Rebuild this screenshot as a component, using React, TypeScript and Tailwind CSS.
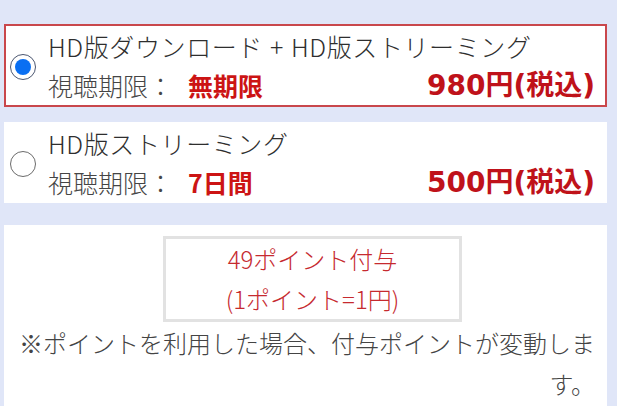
import React from 'react';

const jp = { fontFamily: '"Noto Sans CJK JP", "Noto Sans", sans-serif' };
const price = { fontFamily: '"DejaVu Sans", "Noto Sans CJK JP", sans-serif' };

const Radio = ({ checked }: { checked?: boolean }) => (
  <span
    className={
      'mt-[3px] flex h-[26px] w-[26px] shrink-0 items-center justify-center rounded-full border-[1.5px] bg-white ' +
      (checked ? 'border-[#4b5670]' : 'border-[#6b6b6b]')
    }
  >
    {checked && <span className="h-[16px] w-[16px] rounded-full bg-[#0a6ff2]" />}
  </span>
);

type PlanProps = {
  title: React.ReactNode;
  period: string;
  amount: string;
  checked?: boolean;
};

const Plan = ({ title, period, amount, checked }: PlanProps) => (
  <label
    className={
      'flex items-center bg-white ' +
      (checked ? 'border-2 border-[#c9474c] pl-[4px] pr-[10px]' : 'border border-white pl-[5px] pr-[11px]')
    }
  >
    <Radio checked={checked} />
    <div className="ml-[12px] flex-1">
      <div className="h-[40px] text-[25px] leading-[40px] font-light tracking-[0.6px] whitespace-nowrap text-[#2e2e2e]">
        {title}
      </div>
      <div className="flex h-[39px] items-center justify-between">
        <div className="text-[25px] leading-[39px] font-light text-[#454545]">
          視聴期限：<span className="ml-[15px] font-bold text-[#cc1414]">{period}</span>
        </div>
        <div className="text-[28px] leading-[39px] font-bold text-[#bf121a]" style={price}>
          {amount}円(税込)
        </div>
      </div>
    </div>
  </label>
);

export default function App() {
  return (
    <div className="min-h-screen bg-[#e0e6f8] pt-[24px] pl-[4px]" style={jp}>
      <div className="w-[603px]">
        <Plan
          title={
            <>
              HD版ダウンロード<span className="mx-[7px]">+</span>HD版ストリーミング
            </>
          }
          period="無期限"
          amount="980"
          checked
        />

        <div className="mt-[15px]">
          <Plan title="HD版ストリーミング" period="7日間" amount="500" />
        </div>

        {/* points */}
        <div className="mt-[22px] bg-white px-[12px] pt-[11px] pb-[20px]">
          <div className="ml-[147px] w-[299px] border-[3px] border-[#e2e2e2] text-center text-[24px] leading-[40px] font-light text-[#c62a2f]">
            <p>49ポイント付与</p>
            <p>(1ポイント=1円)</p>
          </div>
          <p className="text-right text-[24px] leading-[41px] font-light text-[#444]">
            ※ポイントを利用した場合、付与ポイントが変動します。
          </p>
        </div>
      </div>
    </div>
  );
}
